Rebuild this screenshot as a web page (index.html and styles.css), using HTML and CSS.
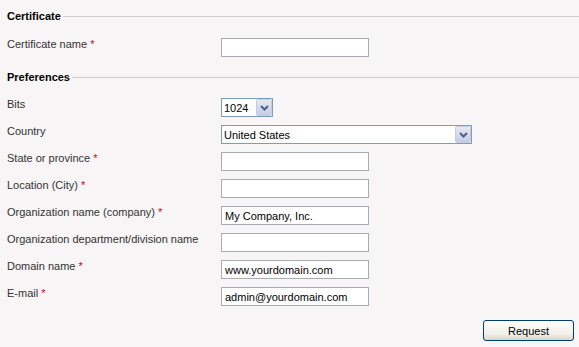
FILE: index.html
```html
<!DOCTYPE html>
<html>
<head>
  <title>Certificate request</title>
  <link rel="stylesheet" href="styles.css">
</head>
<body>
  <form class="cert-form">
    <div class="section-title first"><span>Certificate</span></div>
    <div class="row">
      <label>Certificate name <em>*</em></label>
      <input type="text" class="field" value="">
    </div>

    <div class="section-title"><span>Preferences</span></div>
    <div class="row">
      <label>Bits</label>
      <div class="select bits">
        <select><option>1024</option></select>
        <span class="arrow"><svg width="9" height="6" viewBox="0 0 9 6"><path d="M1 1 L4.5 4.5 L8 1" fill="none" stroke="#4d6185" stroke-width="2"/></svg></span>
      </div>
    </div>
    <div class="row">
      <label>Country</label>
      <div class="select country">
        <select><option>United States</option></select>
        <span class="arrow"><svg width="9" height="6" viewBox="0 0 9 6"><path d="M1 1 L4.5 4.5 L8 1" fill="none" stroke="#4d6185" stroke-width="2"/></svg></span>
      </div>
    </div>
    <div class="row">
      <label>State or province <em>*</em></label>
      <input type="text" class="field" value="">
    </div>
    <div class="row">
      <label>Location (City) <em>*</em></label>
      <input type="text" class="field" value="">
    </div>
    <div class="row">
      <label>Organization name (company) <em>*</em></label>
      <input type="text" class="field" value="My Company, Inc.">
    </div>
    <div class="row">
      <label>Organization department/division name</label>
      <input type="text" class="field" value="">
    </div>
    <div class="row">
      <label>Domain name <em>*</em></label>
      <input type="text" class="field" value="www.yourdomain.com">
    </div>
    <div class="row">
      <label>E-mail <em>*</em></label>
      <input type="text" class="field" value="admin@yourdomain.com">
    </div>

    <div class="actions">
      <button type="button" class="btn">Request</button>
    </div>
  </form>
</body>
</html>
```

FILE: styles.css
```css
body {
  margin: 0;
  background: #f7f5f6;
  font-family: "Liberation Sans", Arial, sans-serif;
  font-size: 11px;
  color: #333;
}
.cert-form {
  padding: 4px 5px 0 7px;
}
.section-title {
  display: flex;
  align-items: center;
  height: 24px;
  margin: 4px -5px 5px 0;
  font-weight: bold;
  font-size: 11px;
  color: #000;
}
.section-title.first {
  margin-top: 0;
  margin-bottom: 6px;
}
.section-title::after {
  content: "";
  flex: 1;
  border-top: 1px solid #cfcccd;
  margin-left: 2px;
}
.row {
  display: grid;
  grid-template-columns: 214px auto;
  align-items: start;
  height: 27px;
}
.row label {
  padding-top: 3px;
  line-height: 14px;
}
.row label em {
  font-style: normal;
  color: #d0000c;
}
.field {
  box-sizing: border-box;
  width: 148px;
  height: 19px;
  margin: 4px 0 0 0;
  padding: 0 3px;
  border: 1px solid #a5acb2;
  background: #fff;
  font-family: "Liberation Sans", Arial, sans-serif;
  font-size: 11px;
  color: #000;
  outline: 0;
}
.select {
  position: relative;
  box-sizing: border-box;
  height: 19px;
  margin-top: 4px;
  border: 1px solid #7f9db9;
  background: #fff;
}
.select.bits { width: 52px; }
.select.country { width: 251px; }
.select select {
  appearance: none;
  -webkit-appearance: none;
  width: 100%;
  height: 17px;
  border: 0;
  padding: 0 2px;
  background: transparent;
  font-family: "Liberation Sans", Arial, sans-serif;
  font-size: 11px;
  color: #000;
  outline: 0;
}
.arrow {
  position: absolute;
  top: 0;
  right: 0;
  box-sizing: border-box;
  width: 16px;
  height: 17px;
  display: flex;
  align-items: center;
  justify-content: center;
  border: 1px solid #c3cbe0;
  border-radius: 2px;
  background: linear-gradient(#e6e9f4, #c6cde2);
}
.actions {
  display: flex;
  justify-content: flex-end;
  margin-top: 10px;
}
.btn {
  width: 91px;
  height: 21px;
  border: 1px solid #003c74;
  border-radius: 3px;
  background: linear-gradient(#ffffff, #f0efe8 70%, #d8d5c9);
  font-family: "Liberation Sans", Arial, sans-serif;
  font-size: 11px;
  color: #000;
  padding: 0;
}
```
